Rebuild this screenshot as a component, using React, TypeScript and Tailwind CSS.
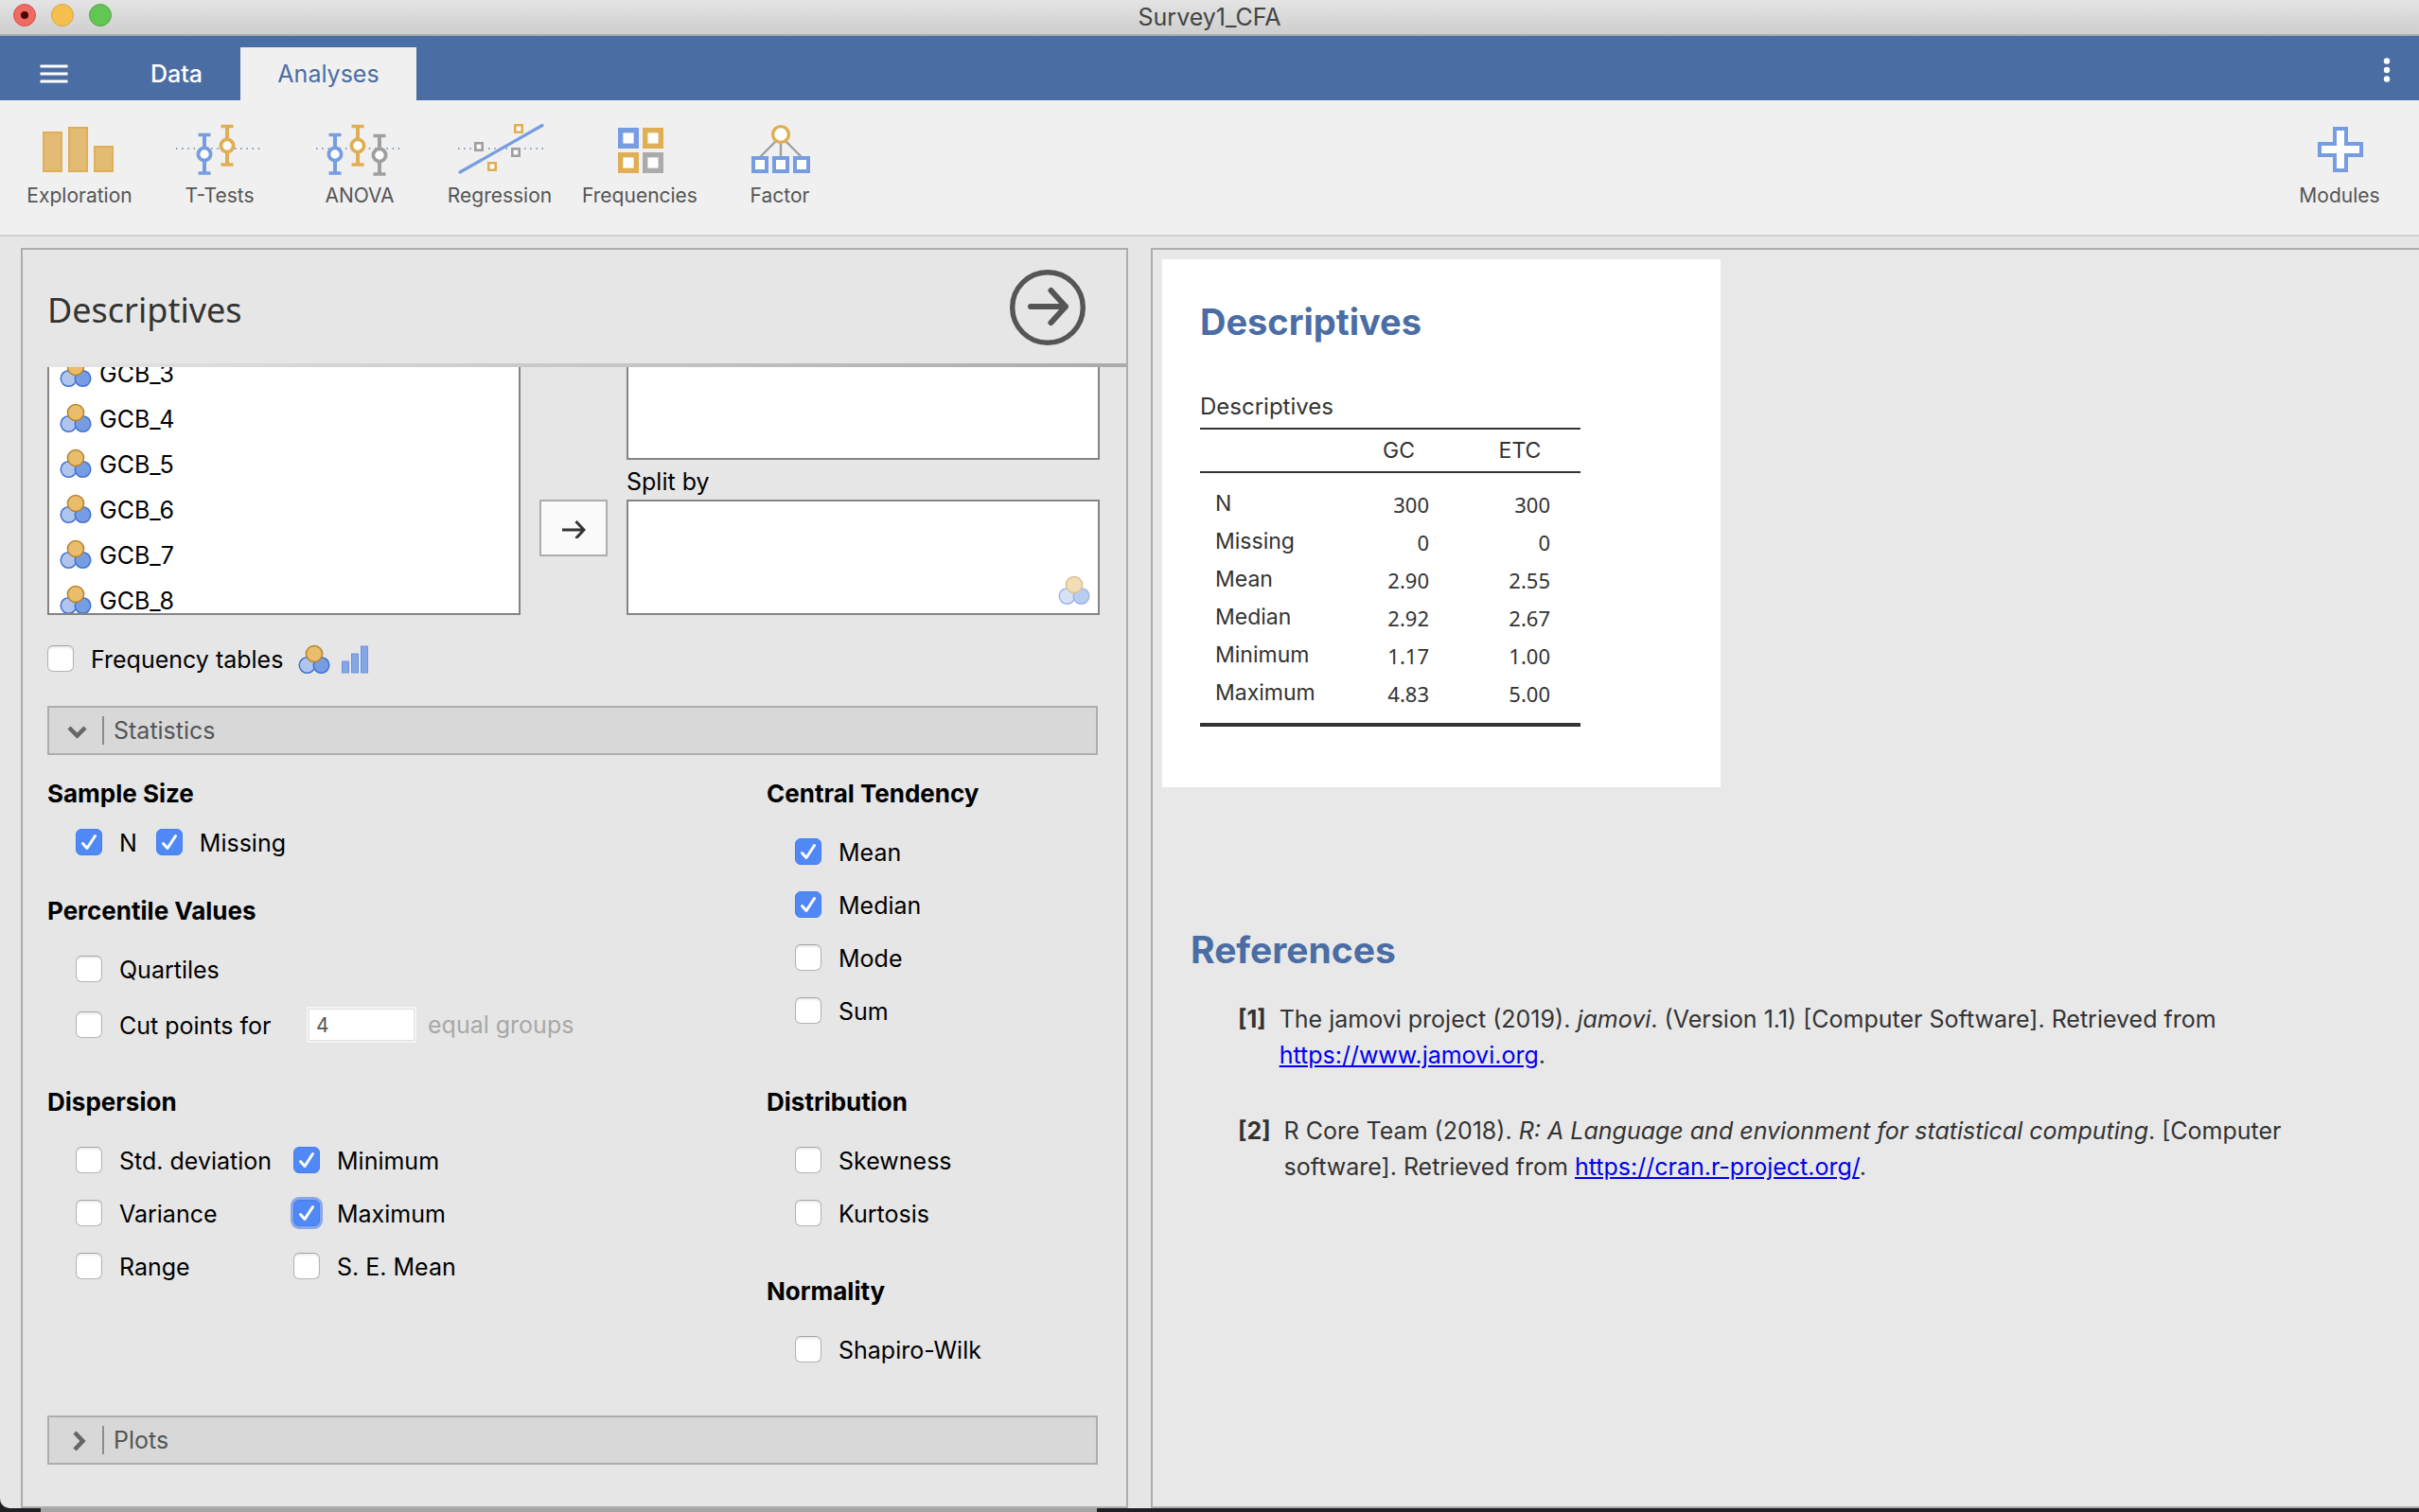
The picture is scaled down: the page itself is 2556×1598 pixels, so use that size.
import type { ReactNode } from 'react';

const BLUE = '#769de2';
const GOLD = '#dfae55';
const GREY = '#9f9f9f';

/* ---------- icons ---------- */

function ToolIcon({ children }: { children: ReactNode }) {
  return (
    <svg viewBox="0 0 96 60" className="h-[60px] w-24" fill="none" aria-hidden="true">
      {children}
    </svg>
  );
}

function DotLine({ x1, x2 }: { x1: number; x2: number }) {
  return <path d={`M${x1} 31H${x2}`} stroke="#5b7bb0" strokeWidth="1.4" strokeDasharray="1.4 4.8" />;
}

function ErrorBar({ x, y, color }: { x: number; y: number; color: string }) {
  return (
    <g stroke={color}>
      <path d={`M${x} ${y}V${y + 43}`} strokeWidth="4" />
      <path d={`M${x - 6.5} ${y + 1.5}H${x + 6.5}M${x - 6.5} ${y + 42}H${x + 6.5}`} strokeWidth="3.4" />
      <circle cx={x} cy={y + 22} r="6.6" fill="#fff" strokeWidth="3.8" />
    </g>
  );
}

function Box({ x, y, size, stroke, color }: { x: number; y: number; size: number; stroke: number; color: string }) {
  return (
    <rect
      x={x + stroke / 2}
      y={y + stroke / 2}
      width={size - stroke}
      height={size - stroke}
      fill="#fff"
      stroke={color}
      strokeWidth={stroke}
    />
  );
}

const ExplorationIcon = () => (
  <ToolIcon>
    <g fill="#e2bc74" stroke={GOLD} strokeWidth="2">
      <rect x="10" y="14" width="19" height="41" />
      <rect x="37" y="9" width="19" height="46" />
      <rect x="64" y="29" width="19" height="26" />
    </g>
  </ToolIcon>
);

const TTestsIcon = () => (
  <ToolIcon>
    <DotLine x1={2} x2={93} />
    <ErrorBar x={32} y={15} color={BLUE} />
    <ErrorBar x={56} y={6} color={GOLD} />
  </ToolIcon>
);

const AnovaIcon = () => (
  <ToolIcon>
    <DotLine x1={2} x2={93} />
    <ErrorBar x={22} y={15} color={BLUE} />
    <ErrorBar x={46} y={6} color={GOLD} />
    <ErrorBar x={69} y={16} color={GREY} />
  </ToolIcon>
);

const RegressionIcon = () => (
  <ToolIcon>
    <DotLine x1={4} x2={20} />
    <DotLine x1={36} x2={60} />
    <DotLine x1={74} x2={96} />
    <path d="M6 56 93 6.5" stroke={BLUE} strokeWidth="3.2" strokeLinecap="round" />
    <Box x={63} y={5} size={10} stroke={2.6} color={GOLD} />
    <Box x={35} y={45} size={10} stroke={2.6} color={GOLD} />
    <Box x={21} y={24} size={10} stroke={2.6} color={GREY} />
    <Box x={60} y={30} size={10} stroke={2.6} color={GREY} />
  </ToolIcon>
);

const FrequenciesIcon = () => (
  <ToolIcon>
    <Box x={25} y={9} size={22} stroke={5.4} color={BLUE} />
    <Box x={51} y={9} size={22} stroke={5.4} color={GOLD} />
    <Box x={25} y={35} size={22} stroke={5.4} color={GOLD} />
    <Box x={51} y={35} size={22} stroke={5.4} color="#ababab" />
  </ToolIcon>
);

const FactorIcon = () => (
  <ToolIcon>
    <path d="M49 18 27 40M49 18V40M49 18 71 40" stroke={GREY} strokeWidth="2.4" />
    <circle cx="49" cy="16" r="8.4" fill="#fff" stroke={GOLD} strokeWidth="3.4" />
    <Box x={18} y={39} size={18} stroke={4} color={BLUE} />
    <Box x={40} y={39} size={18} stroke={4} color={BLUE} />
    <Box x={62} y={39} size={18} stroke={4} color={BLUE} />
  </ToolIcon>
);

const ModulesIcon = () => (
  <ToolIcon>
    <path d="M43 10H55V26H71V38H55V54H43V38H27V26H43Z" fill="#fff" stroke={BLUE} strokeWidth="4" />
  </ToolIcon>
);

function NominalIcon({ className = '' }: { className?: string }) {
  return (
    <svg viewBox="0 0 34 32" className={`h-8 w-[34px] ${className}`} strokeWidth="1.5" aria-hidden="true">
      <circle cx="9.5" cy="22" r="8.3" fill="#b0c5ee" stroke="#3f70d4" />
      <circle cx="24.5" cy="22" r="8.3" fill="#769de2" stroke="#3f70d4" />
      <circle cx="17" cy="10" r="8.6" fill="#e9bd6c" stroke="#b5822f" />
    </svg>
  );
}

const OrdinalIcon = () => (
  <svg viewBox="0 0 28 30" className="h-[30px] w-7" fill="#85a6e6" stroke="#6c92dc" aria-hidden="true">
    <rect x=".5" y="17" width="7" height="12" />
    <rect x="10.500" y="9" width="7" height="20" />
    <rect x="20.500" y="1" width="7" height="28" />
  </svg>
);

/* ---------- form controls ---------- */

interface CheckProps {
  label: string;
  on?: boolean;
  focused?: boolean;
  children?: ReactNode;
}

function Check({ label, on = false, focused = false, children }: CheckProps) {
  return (
    <label className="flex h-7 items-center gap-[18px] whitespace-nowrap">
      <span className="grid size-7 shrink-0">
        <input
          type="checkbox"
          defaultChecked={on}
          className={`peer col-start-1 row-start-1 size-7 appearance-none rounded-[6px] border border-[#b4b4b4] border-t-[#a2a2a2] bg-white shadow-[inset_0_2px_2px_rgba(0,0,0,0.08)] checked:border-[#437df0] checked:bg-[#5089f6] checked:shadow-none ${
            focused ? 'ring-3 ring-[#8ba7ea]' : ''
          }`}
        />
        <svg
          viewBox="0 0 28 28"
          className="pointer-events-none col-start-1 row-start-1 hidden size-7 peer-checked:block"
          fill="none"
          aria-hidden="true"
        >
          <path d="M7.500 15.500 12 20.500 20.500 7.500" stroke="#fff" strokeWidth="3" strokeLinecap="round" strokeLinejoin="round" />
        </svg>
      </span>
      <span className="pt-0.5">{label}</span>
      {children}
    </label>
  );
}

function Group({ title, className = '', children }: { title: string; className?: string; children: ReactNode }) {
  return (
    <fieldset className={className}>
      <legend className="text-[26px] font-bold leading-8">{title}</legend>
      {children}
    </fieldset>
  );
}

function SectionBar({ title, open }: { title: string; open: boolean }) {
  return (
    <button
      type="button"
      aria-expanded={open}
      className="flex h-[52px] w-full items-center border-2 border-[#adadad] bg-[#d8d8d8] text-[#555]"
    >
      <svg viewBox="0 0 24 24" className="ml-[18px] size-6" fill="none" stroke="#666" strokeWidth="4.500" aria-hidden="true">
        {open ? <path d="M3 9 11.500 17.500 20 9" /> : <path d="M9 4 17.500 13 9 22" />}
      </svg>
      <span className="ml-3.5 h-[30px] w-0.5 bg-[#8c8c8c]" />
      <span className="ml-2.5">{title}</span>
    </button>
  );
}

/* ---------- window chrome ---------- */

function TitleBar() {
  return (
    <header className="grid h-[38px] grid-cols-[1fr_auto_1fr] items-start border-b-2 border-[#a9adad] bg-linear-to-b from-[#e4e4e4] to-[#cecece]">
      <div className="flex gap-4 pl-3.5 pt-1">
        <button type="button" aria-label="Close" className="grid size-6 place-items-center rounded-full border border-[#d9534a] bg-[#ed6b60]">
          <span className="size-2 rounded-full bg-[#4b0502]" />
        </button>
        <button type="button" aria-label="Minimize" className="size-6 rounded-full border border-[#dba43c] bg-[#f5bf4f]" />
        <button type="button" aria-label="Zoom" className="size-6 rounded-full border border-[#55a945] bg-[#62c554]" />
      </div>
      <h1 className="leading-9 text-[#444]">Survey1_CFA</h1>
    </header>
  );
}

function MenuBar() {
  return (
    <nav className="flex h-[68px] items-end bg-[#4a6da4]">
      <button type="button" aria-label="Menu" className="grid h-14 w-[119px] place-items-center pr-1.5">
        <svg viewBox="0 0 30 22" className="h-[22px] w-[30px]" stroke="#fff" strokeWidth="3" aria-hidden="true">
          <path d="M.5 3H29.500M.5 11H29.500M.5 19H29.500" />
        </svg>
      </button>
      <button type="button" className="h-14 w-[135px] font-medium text-white">
        Data
      </button>
      <button type="button" className="h-14 w-[186px] bg-[#f0f0f0] text-[#4a6da4]">
        Analyses
      </button>
      <button type="button" aria-label="More" className="ml-auto grid h-14 w-[68px] place-items-center pb-2">
        <svg viewBox="0 0 8 28" className="h-7 w-2" fill="#fff" aria-hidden="true">
          <circle cx="4" cy="4.500" r="3.200" />
          <circle cx="4" cy="14" r="3.200" />
          <circle cx="4" cy="23.500" r="3.200" />
        </svg>
      </button>
    </nav>
  );
}

function Tool({ label, icon }: { label: string; icon: ReactNode }) {
  return (
    <button type="button" className="flex w-[148px] flex-col items-center gap-2 text-[21px] leading-[26px] text-[#555]">
      {icon}
      {label}
    </button>
  );
}

function Toolbar() {
  return (
    <div className="flex h-36 items-start border-b-2 border-[#d0d0d0] bg-[#f0f0f0] px-2.5 pt-5">
      <Tool label="Exploration" icon={<ExplorationIcon />} />
      <Tool label="T-Tests" icon={<TTestsIcon />} />
      <Tool label="ANOVA" icon={<AnovaIcon />} />
      <Tool label="Regression" icon={<RegressionIcon />} />
      <Tool label="Frequencies" icon={<FrequenciesIcon />} />
      <Tool label="Factor" icon={<FactorIcon />} />
      <div className="ml-auto">
        <Tool label="Modules" icon={<ModulesIcon />} />
      </div>
    </div>
  );
}

/* ---------- options panel ---------- */

const VARIABLES = ['GCB_3', 'GCB_4', 'GCB_5', 'GCB_6', 'GCB_7', 'GCB_8'];

function VariableSupplier() {
  return (
    <div className="flex">
      <ul className="h-[262px] w-[500px] overflow-hidden border-2 border-t-0 border-[#848484] bg-white">
        {VARIABLES.map((name) => (
          <li key={name} className="flex h-12 items-center gap-2 pl-[11px] first:-mt-[18px]">
            <NominalIcon />
            <span className="pt-0.5">{name}</span>
          </li>
        ))}
      </ul>
      <button
        type="button"
        aria-label="Move to Split by"
        className="mx-5 mt-[140px] grid h-[60px] w-[72px] place-items-center border-2 border-[#adadad] bg-[#fafafa]"
      >
        <svg viewBox="0 0 26 22" className="h-[22px] w-[26px]" fill="none" stroke="#333" strokeWidth="3" aria-hidden="true">
          <path d="M1 13H24M15.500 4 24 13 15.500 22" />
        </svg>
      </button>
      <div className="flex flex-1 flex-col">
        <div className="h-[98px] border-2 border-t-0 border-[#848484] bg-white" />
        <span className="pt-1 leading-[38px]">Split by</span>
        <div className="flex h-[122px] items-end justify-end border-2 border-[#848484] bg-white p-2">
          <NominalIcon className="opacity-50" />
        </div>
      </div>
    </div>
  );
}

function OptionsPanel() {
  return (
    <section className="ml-[22px] flex w-[1170px] shrink-0 flex-col border-2 border-[#adadad] text-black">
      <div className="flex h-[120px] items-center justify-between pl-[26px] pr-[42px]">
        <h2 className="pt-2 font-['Noto_Sans',sans-serif] text-4xl text-[#333]">Descriptives</h2>
        <button type="button" aria-label="Close options" className="size-[82px]">
          <svg viewBox="0 0 82 82" className="size-[82px] overflow-visible" fill="none" stroke="#555" aria-hidden="true">
            <circle cx="41" cy="42" r="37.300" strokeWidth="5.400" />
            <path d="M23 41H60M44.500 24 60 41 44.500 58" strokeWidth="6" strokeLinecap="round" strokeLinejoin="round" />
          </svg>
        </button>
      </div>
      <div className="h-1 bg-linear-to-r from-[#e6e6e6] to-[#aaa]" />

      <div className="pl-[26px] pr-7">
        <VariableSupplier />
        <div className="mt-8 flex">
          <Check label="Frequency tables">
            <span className="flex items-center gap-3 pt-0.5">
              <NominalIcon className="-ml-0.5" />
              <OrdinalIcon />
            </span>
          </Check>
        </div>
      </div>

      <div className="pl-[26px] pr-[30px] pt-9">
        <SectionBar title="Statistics" open />
        <div className="grid grid-cols-[760px_1fr] pb-14 pt-[25px]">
          <div className="flex flex-col">
            <Group title="Sample Size">
              <div className="ml-[30px] mt-[21px] flex gap-5">
                <Check label="N" on />
                <Check label="Missing" on />
              </div>
            </Group>
            <Group title="Percentile Values" className="mt-[43px]">
              <div className="ml-[30px] mt-[31px]">
                <Check label="Quartiles" />
                <div className="mt-[26px] flex h-[38px] items-center">
                  <div className="w-[244px]">
                    <Check label="Cut points for" />
                  </div>
                  <input
                    aria-label="Number of equal groups"
                    defaultValue="4"
                    className="h-[38px] w-[116px] border-2 border-[#f4f4f4] bg-white pl-2 text-[21px] text-[#555] outline-0 shadow-[inset_0_0_0_1px_#e0e0e0]"
                  />
                  <span className="ml-3 text-[#a8a8a8]">equal groups</span>
                </div>
              </div>
            </Group>
            <Group title="Dispersion" className="mt-[47px]">
              <div className="ml-[30px] mt-[31px] grid grid-cols-[230px_1fr] gap-y-7">
                <Check label="Std. deviation" />
                <Check label="Minimum" on />
                <Check label="Variance" />
                <Check label="Maximum" on focused />
                <Check label="Range" />
                <Check label="S. E. Mean" />
              </div>
            </Group>
          </div>
          <div className="flex flex-col">
            <Group title="Central Tendency">
              <div className="ml-[30px] mt-[31px] flex flex-col gap-7">
                <Check label="Mean" on />
                <Check label="Median" on />
                <Check label="Mode" />
                <Check label="Sum" />
              </div>
            </Group>
            <Group title="Distribution" className="mt-[67px]">
              <div className="ml-[30px] mt-[31px] flex flex-col gap-7">
                <Check label="Skewness" />
                <Check label="Kurtosis" />
              </div>
            </Group>
            <Group title="Normality" className="mt-[53px]">
              <div className="ml-[30px] mt-[31px]">
                <Check label="Shapiro-Wilk" />
              </div>
            </Group>
          </div>
        </div>
        <SectionBar title="Plots" open={false} />
      </div>
    </section>
  );
}

/* ---------- results panel ---------- */

const ROWS: [string, string, string][] = [
  ['N', '300', '300'],
  ['Missing', '0', '0'],
  ['Mean', '2.90', '2.55'],
  ['Median', '2.92', '2.67'],
  ['Minimum', '1.17', '1.00'],
  ['Maximum', '4.83', '5.00'],
];

function ResultsTable() {
  return (
    <table className="w-[402px] table-fixed border-collapse text-[23px]">
      <caption className="pb-1.5 text-left text-2xl leading-8">Descriptives</caption>
      <colgroup>
        <col />
        <col className="w-32" />
        <col className="w-32" />
      </colgroup>
      <thead>
        <tr className="h-[46px] border-y-2 border-[#333]">
          <td />
          <th scope="col" className="font-normal">GC</th>
          <th scope="col" className="font-normal">ETC</th>
        </tr>
      </thead>
      <tbody className="border-b-4 border-[#333] before:block before:h-3 after:block after:h-3">
        {ROWS.map(([name, gc, etc]) => (
          <tr key={name} className="h-10">
            <th scope="row" className="pl-4 text-left font-normal leading-9">{name}</th>
            <td className="pr-8 pt-0.5 text-right font-['Noto_Sans',sans-serif] text-[22px] leading-9">{gc}</td>
            <td className="pr-8 pt-0.5 text-right font-['Noto_Sans',sans-serif] text-[22px] leading-9">{etc}</td>
          </tr>
        ))}
      </tbody>
    </table>
  );
}

function ResultsPanel() {
  return (
    <section className="ml-6 min-w-0 flex-1 border-2 border-r-0 border-[#adadad] bg-[#e8e8e8] pl-2.5 pt-2.5 text-[#333]">
      <article className="h-[558px] w-[590px] bg-white px-10 pt-10">
        <h2 className="text-[38px] font-bold leading-[52px] text-[#4a6da4]">Descriptives</h2>
        <div className="mt-12">
          <ResultsTable />
        </div>
      </article>
      <article className="pl-[30px] pr-20 pt-[146px]">
        <h2 className="text-[39px] font-bold leading-[52px] text-[#4a6da4]">References</h2>
        <div className="ml-[50px] mt-7 flex flex-col gap-[42px] leading-[38px]">
          <p className="flex gap-3.5">
            <b>[1]</b>
            <span>
              The jamovi project (2019). <i>jamovi</i>. (Version 1.1) [Computer Software]. Retrieved from{' '}
              <a href="https://www.jamovi.org" className="text-[#0000ee] underline">https://www.jamovi.org</a>.
            </span>
          </p>
          <p className="flex gap-3.5">
            <b>[2]</b>
            <span>
              R Core Team (2018). <i>R: A Language and envionment for statistical computing</i>. [Computer software].
              Retrieved from{' '}
              <a href="https://cran.r-project.org/" className="text-[#0000ee] underline">https://cran.r-project.org/</a>.
            </span>
          </p>
        </div>
      </article>
    </section>
  );
}

export default function App() {
  return (
    <div className="flex min-h-screen flex-col bg-[#1f2024] font-[Inter,sans-serif] text-[25px] leading-8">
      <div className="flex flex-1 flex-col overflow-hidden rounded-bl-[10px] bg-[#e6e6e6]">
        <TitleBar />
        <MenuBar />
        <Toolbar />
        <main className="flex flex-1 pt-3">
          <OptionsPanel />
          <ResultsPanel />
        </main>
      </div>
      <div className="flex h-1">
        <div className="ml-[43px] w-[1116px] bg-[#a4a4a4]" />
      </div>
    </div>
  );
}
